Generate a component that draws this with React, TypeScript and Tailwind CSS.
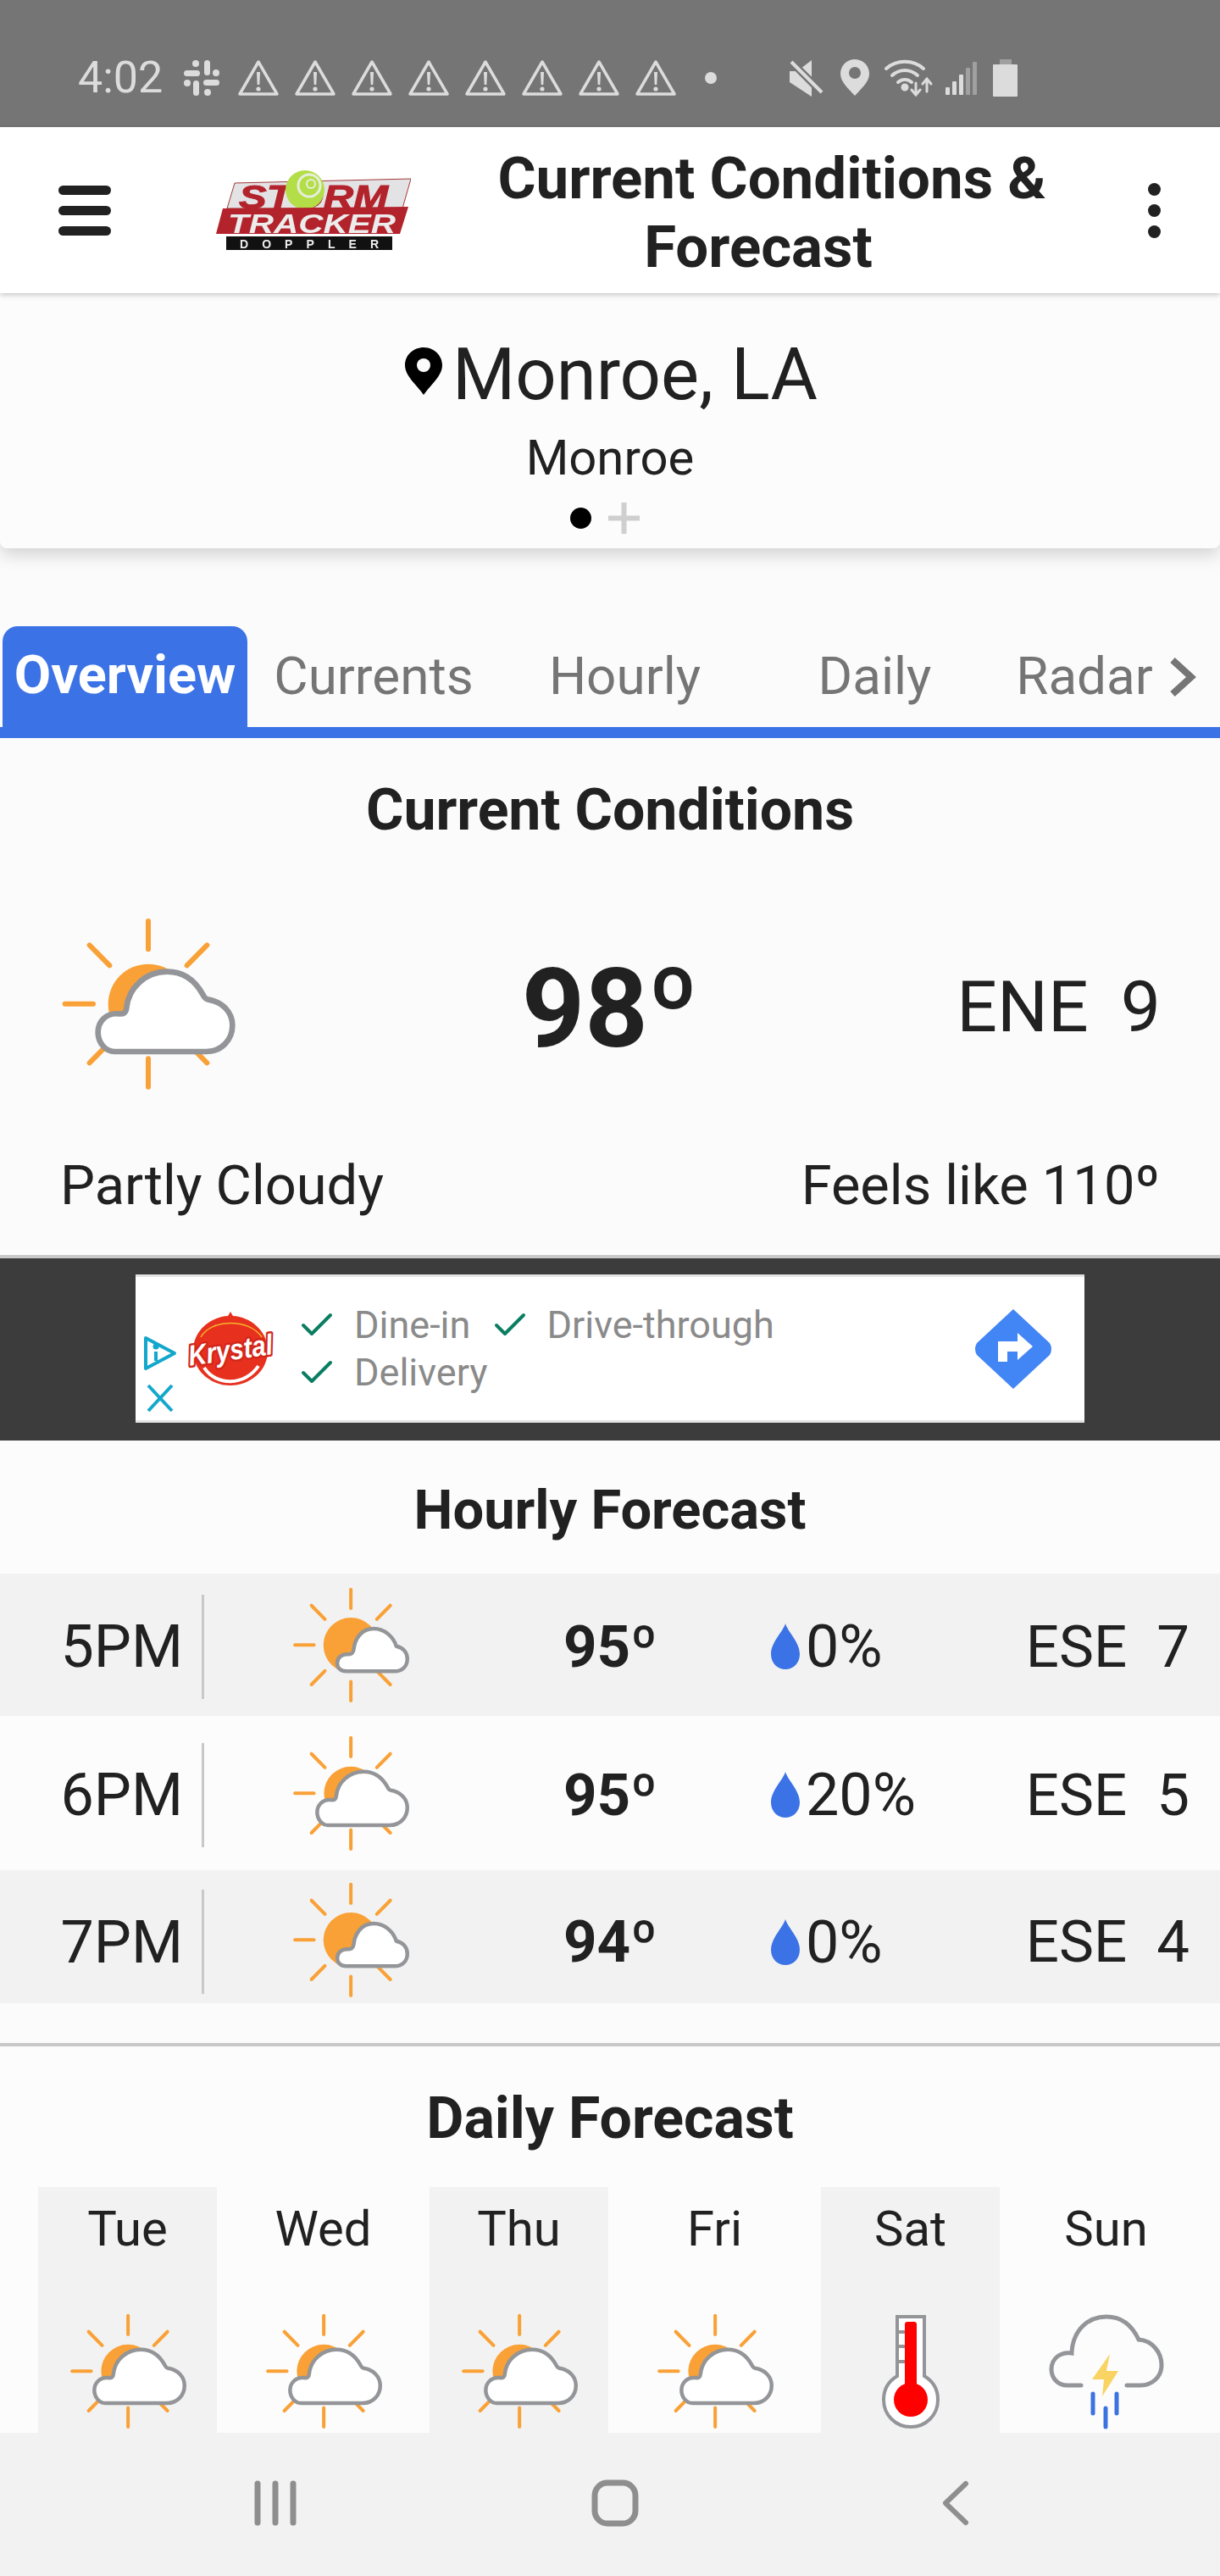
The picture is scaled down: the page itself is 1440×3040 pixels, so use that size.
import React from 'react';
import { Check } from 'lucide-react';

const hours = [
  { time: '5PM', temp: '95º', rain: '0%', wind: 'ESE', speed: '7', sunny: true, rowClass: 'bg-[#f2f2f2] h-[168px] pt-[4px]' },
  { time: '6PM', temp: '95º', rain: '20%', wind: 'ESE', speed: '5', sunny: false, rowClass: 'bg-[#fcfcfc] h-[182px] pt-[4px]' },
  { time: '7PM', temp: '94º', rain: '0%', wind: 'ESE', speed: '4', sunny: true, rowClass: 'bg-[#f2f2f2] h-[157px] pt-[12px]' },
];

const days = ['Tue', 'Wed', 'Thu', 'Fri', 'Sat', 'Sun'];

const Rays = () => (
  <g stroke="#f9a136" strokeWidth="18" strokeLinecap="round">
    <line x1="345" y1="48" x2="345" y2="148" />
    <line x1="137" y1="133" x2="208" y2="205" />
    <line x1="553" y1="133" x2="482" y2="205" />
    <line x1="50" y1="341" x2="150" y2="341" />
    <line x1="137" y1="550" x2="208" y2="478" />
    <line x1="553" y1="550" x2="482" y2="478" />
    <line x1="345" y1="535" x2="345" y2="635" />
  </g>
);

const PartlyCloudy = ({ className }: { className: string }) => (
  <svg viewBox="0 0 720 720" className={className}>
    <Rays />
    <circle cx="345" cy="342" r="142" fill="#f9a136" />
    <path
      d="M225 510H550C605 510 643 468 643 417C643 370 607 333 555 325C546 323 542 316 537 306C510 258 470 227 412 227C335 227 275 285 268 355C267 372 258 378 240 376C195 372 167 405 167 442C167 480 195 510 225 510Z"
      fill="#fff"
      stroke="#939598"
      strokeWidth="20"
      strokeLinejoin="round"
    />
  </svg>
);

// hourly rows with the sun out use a smaller cloud
const MostlySunny = ({ className }: { className: string }) => (
  <svg viewBox="0 0 720 720" className={className}>
    <Rays />
    <circle cx="345" cy="342" r="145" fill="#f9a136" />
    <path
      d="M320 480H575C620 480 643 450 643 415C643 380 620 355 585 348C570 300 525 255 465 255C400 255 365 310 360 365C358 385 345 392 330 390C295 388 273 410 273 437C273 462 292 480 320 480Z"
      fill="#fff"
      stroke="#939598"
      strokeWidth="20"
      strokeLinejoin="round"
    />
  </svg>
);

const Thermometer = ({ className }: { className: string }) => (
  <svg viewBox="0 0 136 136" className={className}>
    <path
      d="M52 3H84V73C94 79 100 89 100 101C100 119 86 133 68 133C50 133 36 119 36 101C36 89 42 79 52 73Z"
      fill="#fff"
      stroke="#939598"
      strokeWidth="4"
    />
    <g stroke="#939598" strokeWidth="4">
      <line x1="53" y1="21" x2="61" y2="21" />
      <line x1="53" y1="38" x2="61" y2="38" />
      <line x1="53" y1="56" x2="61" y2="56" />
    </g>
    <rect x="61" y="9" width="14" height="90" rx="3" fill="#f00" />
    <circle cx="68" cy="101" r="20" fill="#f00" />
  </svg>
);

const Storm = ({ className }: { className: string }) => (
  <svg viewBox="0 0 136 136" className={className}>
    <path
      d="M38 84H22C10 84 3 75 3 65C3 52 14 44 27 46C28 20 45 3 68 3C88 3 99 15 106 30C122 31 133 45 133 60C133 74 122 84 108 84H92"
      fill="none"
      stroke="#939598"
      strokeWidth="5"
      strokeLinecap="round"
    />
    <path d="M72 47L51 77H65L63 97L82 67H68Z" fill="#f9d463" />
    <g stroke="#3b73e0" strokeWidth="5" strokeLinecap="round">
      <line x1="52" y1="94" x2="52" y2="117" />
      <line x1="80" y1="94" x2="80" y2="117" />
      <line x1="67" y1="111" x2="67" y2="133" />
    </g>
  </svg>
);

const Triangle = () => (
  <svg viewBox="0 0 50 44" className="w-[50px] h-[44px] shrink-0 mr-[17px]">
    <path d="M25 3L47 41H3Z" fill="none" stroke="#dcdcdc" strokeWidth="3.5" strokeLinejoin="round" />
    <path d="M23 15H27L26.3 30H23.7Z" fill="#dcdcdc" />
    <circle cx="25" cy="35" r="2.6" fill="#dcdcdc" />
  </svg>
);

const Drop = () => (
  <svg viewBox="0 0 36 54" className="w-[36px] h-[54px] shrink-0">
    <path d="M18 0C21 10 35 22 35 36C35 47 27 54 18 54C9 54 1 47 1 36C1 22 15 10 18 0Z" fill="#3b73e6" />
  </svg>
);

const StatusBar = () => (
  <div className="h-[150px] shrink-0 bg-[#757575] flex items-center pl-[92px] pt-[34px] text-[#dcdcdc]">
    <span className="text-[52px] leading-none w-[125px] shrink-0">4:02</span>
    <svg viewBox="0 0 42 42" className="w-[42px] h-[42px] shrink-0 mr-[21px]" fill="#dcdcdc">
      <rect x="0" y="12" width="19" height="7" rx="3.5" />
      <rect x="24" y="0" width="7" height="18" rx="3.5" />
      <rect x="23" y="23" width="19" height="7" rx="3.5" />
      <rect x="11" y="24" width="7" height="18" rx="3.5" />
      <circle cx="14" cy="4" r="4" />
      <circle cx="38" cy="15" r="4" />
      <circle cx="4" cy="27" r="4" />
      <circle cx="28" cy="38" r="4" />
    </svg>
    {[0, 1, 2, 3, 4, 5, 6, 7].map((i) => (
      <Triangle key={i} />
    ))}
    <span className="w-[14px] h-[14px] rounded-full bg-[#dcdcdc] shrink-0 ml-[16px] mr-[86px]" />
    <svg viewBox="0 0 40 44" className="w-[40px] h-[44px] shrink-0 mr-[20px]" fill="#dcdcdc">
      <path d="M0 14H9L26 1V44L0 27Z" />
      <line x1="2" y1="3" x2="38" y2="39" stroke="#757575" strokeWidth="9" />
      <line x1="2" y1="3" x2="38" y2="39" stroke="#dcdcdc" strokeWidth="4" />
    </svg>
    <svg viewBox="0 0 34 44" className="w-[34px] h-[44px] shrink-0 mr-[18px]">
      <path d="M17 0C8 0 0 7 0 17C0 27 10 35 17 43C24 35 34 27 34 17C34 7 26 0 17 0Z" fill="#dcdcdc" />
      <circle cx="17" cy="16" r="7" fill="#757575" />
    </svg>
    <svg viewBox="0 0 58 44" className="w-[58px] h-[44px] shrink-0 mr-[14px]" fill="none" stroke="#dcdcdc" strokeWidth="4" strokeLinecap="round">
      <path d="M2 11C14 0 34 0 46 11" />
      <path d="M9 19C18 11 30 11 39 19" />
      <path d="M16 27C21 23 27 23 32 27" />
      <circle cx="24" cy="33" r="2.5" fill="#dcdcdc" />
      <path d="M37 28V41M32 36L37 42L42 36" strokeWidth="3" />
      <path d="M50 38V24M45 29L50 23L55 29" strokeWidth="3" />
    </svg>
    <svg viewBox="0 0 38 42" className="w-[38px] h-[42px] shrink-0 mr-[18px]">
      <rect x="0" y="32" width="5" height="9" rx="1" fill="#dcdcdc" />
      <rect x="8" y="25" width="5" height="16" rx="1" fill="#dcdcdc" />
      <rect x="16" y="17" width="5" height="24" rx="1" fill="#dcdcdc" />
      <rect x="24" y="9" width="5" height="32" rx="1" fill="#a0a0a0" />
      <rect x="32" y="2" width="5" height="39" rx="1" fill="#a0a0a0" />
    </svg>
    <svg viewBox="0 0 30 44" className="w-[30px] h-[44px] shrink-0">
      <rect x="8" y="0" width="14" height="7" fill="#a0a0a0" />
      <rect x="0" y="6" width="29" height="38" rx="1" fill="#dcdcdc" />
    </svg>
  </div>
);

const StormLogo = () => (
  <svg viewBox="0 0 230 95" className="w-[230px] h-[95px] shrink-0 blur-[0.6px]">
    <path d="M22 15L230 10L220 45H13Z" fill="#e3e3e6" stroke="#a23a3a" strokeWidth="1" />
    <text x="27" y="45" fontFamily="'Liberation Sans',sans-serif" fontWeight="700" fontStyle="italic" fontSize="38" fill="#b3232b" stroke="#b3232b" strokeWidth="1" textLength="176" lengthAdjust="spacingAndGlyphs">STORM</text>
    <circle cx="105" cy="23" r="23" fill="#b4de47" />
    <circle cx="110" cy="18" r="13" fill="none" stroke="#e6eede" strokeWidth="3" />
    <circle cx="112" cy="16" r="5" fill="none" stroke="#e6eede" strokeWidth="2" />
    <path d="M8 45L227 43L217 75H0Z" fill="#b3232b" />
    <text x="14" y="74" fontFamily="'Liberation Sans',sans-serif" fontWeight="700" fontStyle="italic" fontSize="31" fill="#ececec" textLength="198" lengthAdjust="spacingAndGlyphs">TRACKER</text>
    <rect x="12" y="78" width="196" height="16" fill="#111" />
    <text x="28" y="92" fontFamily="'Liberation Sans',sans-serif" fontWeight="700" fontSize="14" fill="#eee" textLength="164">DOPPLER</text>
  </svg>
);

const Header = () => (
  <div className="h-[196px] shrink-0 bg-white flex items-center relative z-20 shadow-[0_2px_6px_rgba(0,0,0,0.22)]">
    <div className="ml-[69px] w-[62px] flex flex-col gap-[13px] shrink-0">
      <span className="h-[11px] rounded-full bg-[#212121]" />
      <span className="h-[11px] rounded-full bg-[#212121]" />
      <span className="h-[11px] rounded-full bg-[#212121]" />
    </div>
    <div className="ml-[124px] shrink-0">
      <StormLogo />
    </div>
    <h1 className="w-[760px] ml-[46px] pt-[6px] shrink-0 text-center font-bold text-[69px] leading-[81px] text-[#212121]">
      Current Conditions &amp;
      <span className="block pr-[32px]">Forecast</span>
    </h1>
    <div className="ml-[64px] flex flex-col gap-[10px] shrink-0">
      <span className="w-[15px] h-[15px] rounded-full bg-[#212121]" />
      <span className="w-[15px] h-[15px] rounded-full bg-[#212121]" />
      <span className="w-[15px] h-[15px] rounded-full bg-[#212121]" />
    </div>
  </div>
);

const Location = () => (
  <div className="h-[301px] shrink-0 bg-[#fcfcfc] rounded-b-[8px] shadow-[0_8px_20px_rgba(0,0,0,0.16)] relative z-10 flex flex-col items-center">
    <div className="flex items-center mt-[54px] h-[84px]">
      <svg viewBox="0 0 44 56" className="w-[44px] h-[56px] mr-[15px] mt-[-8px] translate-x-[3px]">
        <path d="M22 0C10 0 0 9 0 21C0 34 14 44 22 56C30 44 44 34 44 21C44 9 34 0 22 0Z" fill="#000" />
        <circle cx="22" cy="21" r="8" fill="#fcfcfc" />
      </svg>
      <span className="text-[85px] leading-none text-[#212121]">Monroe, LA</span>
    </div>
    <div className="text-[58px] leading-none mt-[27px] text-[#212121]">Monroe</div>
    <div className="flex items-center gap-[20px] mt-[24px] mr-[13px]">
      <span className="w-[25px] h-[25px] rounded-full bg-black" />
      <svg viewBox="0 0 37 37" className="w-[37px] h-[37px]" stroke="#cfcfcf" strokeWidth="6">
        <line x1="0" y1="18.5" x2="37" y2="18.5" />
        <line x1="18.5" y1="0" x2="18.5" y2="37" />
      </svg>
    </div>
  </div>
);

const Tabs = () => (
  <div className="h-[224px] shrink-0 flex items-end border-b-[13px] border-[#3b73e6] bg-[#fbfbfb] pl-[3px] text-[62px] text-[#757575]">
    <div className="w-[289px] h-[119px] bg-[#3b73e6] rounded-t-[18px] text-white font-bold text-[63px] flex items-center justify-center shrink-0 pb-[2px]">
      Overview
    </div>
    <div className="w-[298px] h-[119px] flex items-center justify-center shrink-0 pb-[2px]">Currents</div>
    <div className="w-[295px] h-[119px] flex items-center justify-center shrink-0 pb-[2px]">Hourly</div>
    <div className="w-[295px] h-[119px] flex items-center justify-center shrink-0 pb-[2px]">Daily</div>
    <div className="w-[200px] h-[119px] flex items-center justify-center shrink-0 pb-[2px]">Radar</div>
    <svg viewBox="0 0 34 46" className="w-[34px] h-[46px] ml-[-2px] mb-[36px] shrink-0" fill="none" stroke="#757575" strokeWidth="8">
      <path d="M6 3L28 23L6 43" />
    </svg>
  </div>
);

const Current = () => (
  <section className="h-[614px] shrink-0 bg-[#fbfbfb] border-b-[4px] border-[#c8c8c8] flex flex-col">
    <h2 className="text-center font-bold text-[68px] leading-none mt-[51px] text-[#212121]">Current Conditions</h2>
    <div className="grid grid-cols-3 items-center mt-[81px] h-[240px]">
      <PartlyCloudy className="w-[240px] h-[240px] ml-[60px]" />
      <span className="text-center font-bold text-[130px] leading-none text-[#212121]">98º</span>
      <div className="flex justify-end gap-[38px] pr-[70px] pb-[4px] text-[84px] leading-none text-[#212121]">
        <span>ENE</span>
        <span>9</span>
      </div>
    </div>
    <div className="flex justify-between px-[71px] mt-[56px] text-[65px] leading-none text-[#212121]">
      <span>Partly Cloudy</span>
      <span>Feels like 110º</span>
    </div>
  </section>
);

const Ad = () => (
  <div className="h-[215px] shrink-0 bg-[#3c3c3c] flex justify-center pt-[19px]">
    <div className="w-[1120px] h-[175px] bg-white border-y-[3px] border-[#e4e4e4] flex items-stretch relative">
      <div className="w-[57px] shrink-0 flex flex-col items-center pt-[69px] gap-[15px]">
        <svg viewBox="0 0 40 42" className="w-[40px] h-[42px]" fill="none" stroke="#12a7cc" strokeWidth="4">
          <path d="M3 3L37 21L3 39Z" strokeLinejoin="round" />
          <path d="M15 19V30" />
          <circle cx="15" cy="13" r="1.5" fill="#12a7cc" />
        </svg>
        <svg viewBox="0 0 32 34" className="w-[32px] h-[34px]" stroke="#12a7cc" strokeWidth="4">
          <line x1="2" y1="2" x2="30" y2="32" />
          <line x1="30" y1="2" x2="2" y2="32" />
        </svg>
      </div>
      <svg viewBox="0 0 110 88" className="w-[110px] h-[88px] shrink-0 mt-[41px] overflow-visible">
        <path d="M55 0L58 5C78 6 99 22 99 46C99 70 78 87 55 87C32 87 11 70 11 46C11 22 32 6 52 5Z" fill="#e8301f" />
        <path d="M20 30C32 8 78 8 92 30" fill="none" stroke="#f5b52a" strokeWidth="1.5" />
        <path d="M24 66C38 88 72 88 88 64" fill="none" stroke="#fff" strokeWidth="4" />
        <g transform="rotate(-8 55 46)">
          <text x="5" y="57" fontFamily="'Liberation Sans',sans-serif" fontWeight="700" fontStyle="italic" fontSize="34" fill="#fff" stroke="#d3261a" strokeWidth="5" paintOrder="stroke" strokeLinejoin="round" textLength="100" lengthAdjust="spacingAndGlyphs">Krystal</text>
        </g>
      </svg>
      <div className="ml-[23px] flex flex-col gap-[8px] pt-[33px] text-[#8a8a8a] text-[45px] leading-[48px]">
        <div className="flex items-center">
          <Check className="w-[48px] h-[48px] text-[#0a7d62] mr-[20px] shrink-0" strokeWidth={2} />
          <span>Dine-in</span>
          <Check className="w-[48px] h-[48px] text-[#0a7d62] ml-[23px] mr-[19px] shrink-0" strokeWidth={2} />
          <span>Drive-through</span>
        </div>
        <div className="flex items-center">
          <Check className="w-[48px] h-[48px] text-[#0a7d62] mr-[20px] shrink-0" strokeWidth={2} />
          <span>Delivery</span>
        </div>
      </div>
      <svg viewBox="0 0 94 94" className="absolute right-[37px] top-[38px] w-[94px] h-[94px]">
        <path d="M47 0L90 40Q94 47 90 54L47 94L4 54Q0 47 4 40Z" fill="#4285f4" />
        <path d="M29 62V38H52V28L70 44L52 60V50H40V62Z" fill="#fff" />
      </svg>
    </div>
  </div>
);

const Hourly = () => (
  <section className="shrink-0 bg-[#fcfcfc]">
    <h2 className="text-center font-bold text-[65px] leading-none h-[157px] pt-[50px] text-[#212121] box-border">Hourly Forecast</h2>
    {hours.map((hour) => (
      <div key={hour.time} className={`flex items-center text-[#212121] ${hour.rowClass}`}>
        <span className="w-[216px] text-right text-[70px] leading-none shrink-0">{hour.time}</span>
        <span className="w-[3px] h-[123px] bg-[#c8c8c8] ml-[22px] shrink-0" />
        <div className="w-[161px] h-[161px] ml-[96px] mt-[4px] shrink-0">
          {hour.sunny ? <MostlySunny className="w-full h-full" /> : <PartlyCloudy className="w-full h-full" />}
        </div>
        <span className="w-[107px] ml-[167px] font-bold text-[69px] leading-none shrink-0">{hour.temp}</span>
        <span className="ml-[137px] shrink-0"><Drop /></span>
        <span className="ml-[6px] w-[220px] text-[70px] leading-none shrink-0">{hour.rain}</span>
        <div className="ml-auto mr-[36px] flex gap-[35px] text-[69px] leading-none">
          <span>{hour.wind}</span>
          <span>{hour.speed}</span>
        </div>
      </div>
    ))}
  </section>
);

const Daily = () => (
  <section className="flex-1 min-h-0 overflow-hidden bg-[#fcfcfc] border-t-[4px] border-[#c8c8c8] mt-[47px]">
    <h2 className="text-center font-bold text-[68px] leading-none h-[166px] pt-[51px] text-[#212121] box-border">Daily Forecast</h2>
    <div className="grid grid-cols-6 ml-[35px] w-[1386px]">
      {days.map((day, i) => (
        <div key={day} className={`flex flex-col items-center h-[320px] mx-[10px] ${i % 2 === 0 ? 'bg-[#f2f2f2]' : ''}`}>
          <span className="text-[58px] leading-none mt-[20px] text-[#212121]">{day}</span>
          {day === 'Sat' ? (
            <Thermometer className="w-[136px] h-[136px] mt-[72px]" />
          ) : day === 'Sun' ? (
            <Storm className="w-[136px] h-[136px] mt-[72px]" />
          ) : (
            <PartlyCloudy className="w-[161px] h-[161px] mt-[63px] ml-[7px]" />
          )}
        </div>
      ))}
    </div>
  </section>
);

const NavBar = () => (
  <div className="h-[169px] shrink-0 bg-[#f2f2f2] relative z-10 flex items-center justify-center pb-[4px] pl-[4px]">
    <svg viewBox="0 0 50 54" className="w-[50px] h-[54px] shrink-0" stroke="#8e8e8e" strokeWidth="7" strokeLinecap="round">
      <line x1="4" y1="4" x2="4" y2="50" />
      <line x1="25" y1="4" x2="25" y2="50" />
      <line x1="46" y1="4" x2="46" y2="50" />
    </svg>
    <svg viewBox="0 0 56 56" className="w-[56px] h-[56px] shrink-0 ml-[348px]" fill="none" stroke="#8e8e8e" strokeWidth="7">
      <rect x="4" y="4" width="48" height="48" rx="15" />
    </svg>
    <svg viewBox="0 0 32 54" className="w-[32px] h-[54px] shrink-0 ml-[358px]" fill="none" stroke="#8e8e8e" strokeWidth="6" strokeLinecap="round" strokeLinejoin="round">
      <path d="M28 4L4 27L28 50" />
    </svg>
  </div>
);

export default function App() {
  return (
    <div className="w-[1440px] h-[3040px] flex flex-col overflow-hidden bg-[#fbfbfb] font-['Roboto',sans-serif]">
      <StatusBar />
      <Header />
      <Location />
      <Tabs />
      <Current />
      <Ad />
      <Hourly />
      <Daily />
      <NavBar />
    </div>
  );
}
